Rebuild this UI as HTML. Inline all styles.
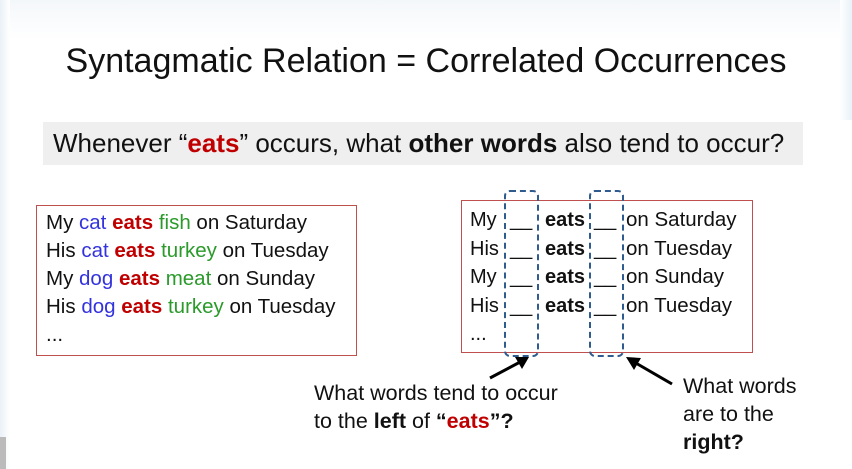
<!DOCTYPE html>
<html><head><meta charset="utf-8"><style>
body{margin:0;width:852px;height:469px;background:#fff;position:relative;overflow:hidden;font-family:"Liberation Sans",sans-serif;color:#111}
.a{position:absolute;white-space:nowrap}
.r{color:#c00000;font-weight:bold}.b{color:#3333dd}.g{color:#2a9a2a}
</style></head><body>
<div class="a" style="left:0;top:0;width:852px;height:40px;background:linear-gradient(#f4f7fa,#fff)"></div>
<div class="a" style="left:0;top:0;width:10px;height:469px;background:linear-gradient(90deg,#eaf1f7,#fff)"></div>
<div class="a" style="left:840px;top:0;width:12px;height:120px;background:linear-gradient(90deg,#fff,#e8f1f8)"></div>
<div class="a" style="left:0;top:437px;width:6px;height:32px;background:#bbb"></div>
<div class="a" style="left:40px;top:41px;width:772px;text-align:center;font-size:34px;line-height:40px">Syntagmatic Relation = Correlated Occurrences</div>
<div class="a" style="left:43px;top:122px;width:760px;height:43px;background:#efefef"></div>
<div class="a" style="left:53px;top:127px;font-size:26px;line-height:32px">Whenever “<span class="r">eats</span>” occurs, what <b>other words</b> also tend to occur?</div>
<div class="a" style="left:36px;top:205px;width:319px;height:149px;border:1px solid #c0504d"></div>
<div class="a" style="left:46px;top:209px;font-size:20.5px;line-height:28px">My <span class="b">cat</span> <span class="r">eats</span> <span class="g">fish</span> on Saturday<br>His <span class="b">cat</span> <span class="r">eats</span> <span class="g">turkey</span> on Tuesday<br>My <span class="b">dog</span> <span class="r">eats</span> <span class="g">meat</span> on Sunday<br>His <span class="b">dog</span> <span class="r">eats</span> <span class="g">turkey</span> on Tuesday<br>...</div>
<div class="a" style="left:461px;top:200px;width:290px;height:151px;border:1px solid #c0504d"></div>
<div class="a" style="left:504px;top:190px;width:31px;height:163px;border:2px dashed #2f5b8f;border-radius:6px"></div>
<div class="a" style="left:589px;top:190px;width:31px;height:163px;border:2px dashed #2f5b8f;border-radius:6px"></div>
<div class="a" style="left:470px;top:206px;font-size:20px;line-height:28.5px">My<br>His<br>My<br>His<br>...</div>
<div class="a" style="left:510px;top:206px;font-size:20px;line-height:28.5px">__<br>__<br>__<br>__</div>
<div class="a" style="left:545px;top:206px;font-size:20px;line-height:28.5px;font-weight:bold">eats<br>eats<br>eats<br>eats</div>
<div class="a" style="left:594px;top:206px;font-size:20px;line-height:28.5px">__<br>__<br>__<br>__</div>
<div class="a" style="left:626px;top:206px;font-size:20.5px;line-height:28.5px">on Saturday<br>on Tuesday<br>on Sunday<br>on Tuesday</div>
<svg class="a" style="left:0;top:0" width="852" height="469">
<line x1="490" y1="378" x2="522" y2="361" stroke="#000" stroke-width="3"/>
<polygon points="529,357 515,357 522,369" fill="#000"/>
<line x1="672" y1="384" x2="634" y2="362" stroke="#000" stroke-width="3"/>
<polygon points="626,357 641,358 634,370" fill="#000"/>
</svg>
<div class="a" style="left:314px;top:379px;font-size:21.5px;line-height:28px">What words tend to occur<br>to the <b>left</b> of <b>“<span style="color:#c00000">eats</span>”?</b></div>
<div class="a" style="left:683px;top:372px;font-size:21.5px;line-height:28px">What words<br>are to the<br><b>right?</b></div>
</body></html>
